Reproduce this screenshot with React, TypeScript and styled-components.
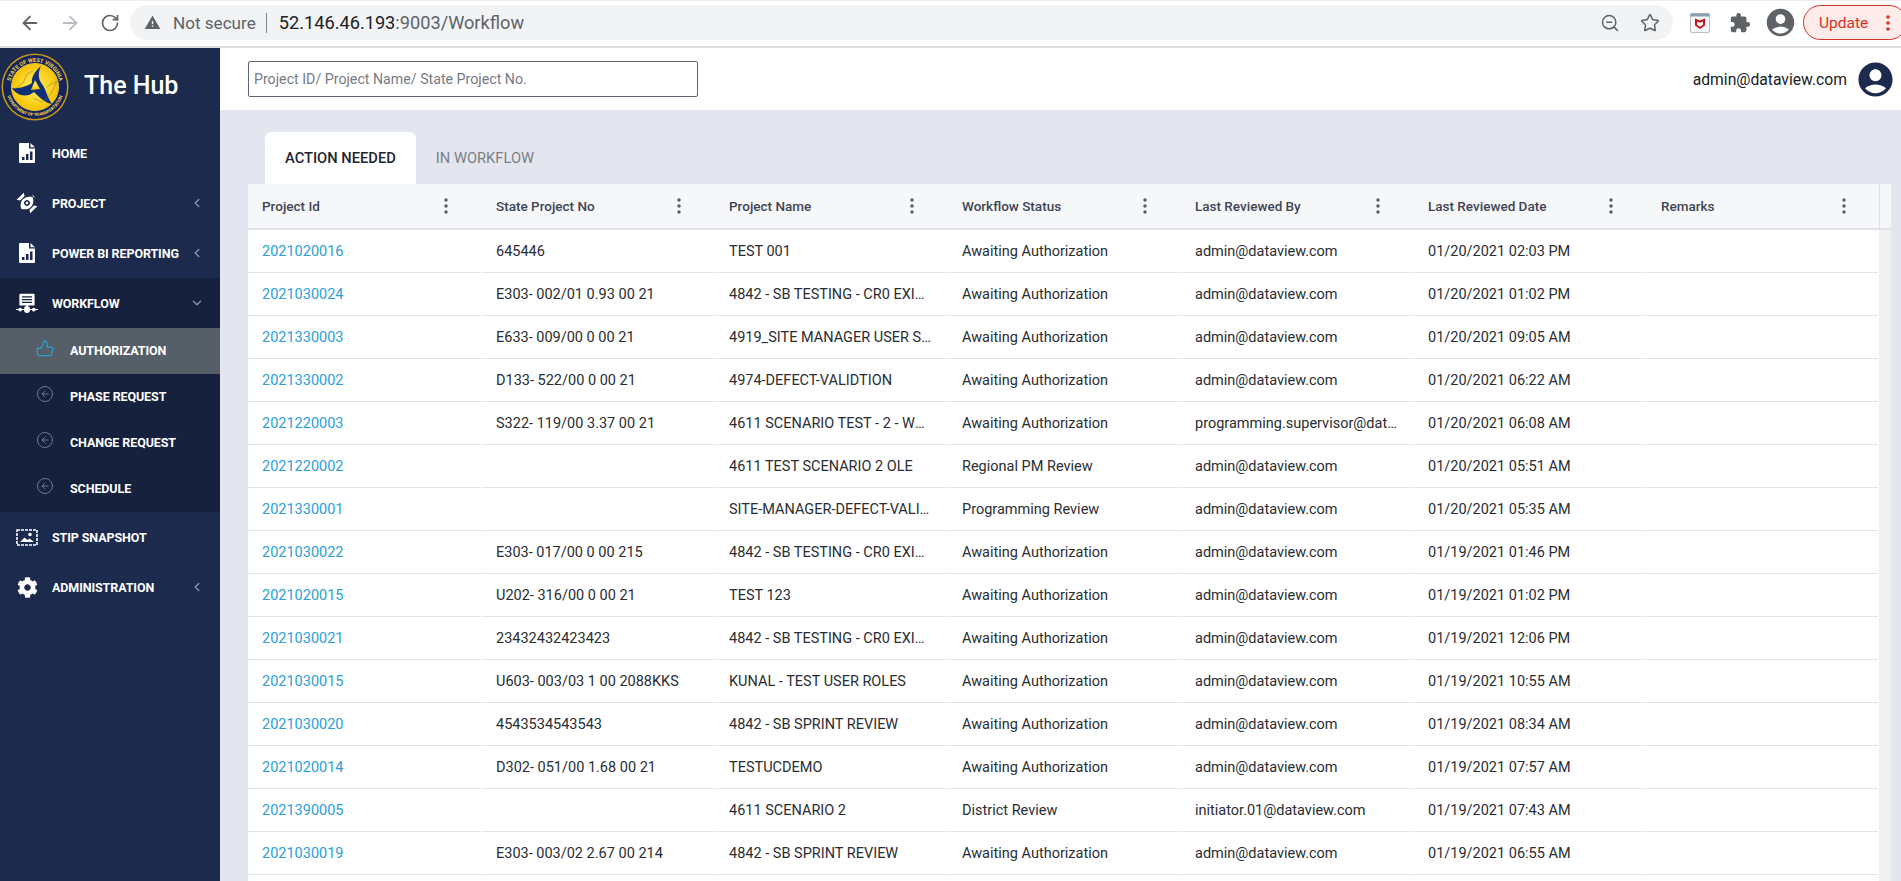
import * as React from 'react';
import styled, { createGlobalStyle } from 'styled-components';
import {
  ArrowLeft,
  ArrowRight,
  ChevronDown,
  ChevronLeft,
  CircleArrowLeft,
  RotateCw,
  Star,
  ZoomOut,
} from 'lucide-react';
import { FaCog } from 'react-icons/fa';
import { MdAccountCircle, MdExtension, MdWarning } from 'react-icons/md';

const COLOR_NAVY = '#1c2b4d';
const COLOR_NAVY_DARK = '#16213d';
const COLOR_LINK = '#2ba0d8';

const GlobalStyle = createGlobalStyle`
  html, body {
    margin: 0;
    height: 100%;
    overflow: hidden;
    background: #fff;
    font-family: Roboto, "Liberation Sans", sans-serif;
  }
  * { box-sizing: border-box; }
`;

const Page = styled.div`
  width: 1901px;
  height: 881px;
  display: flex;
  flex-direction: column;
  overflow: hidden;
`;

/* browser chrome */
const BrowserBar = styled.div`
  height: 48px;
  flex: none;
  display: flex;
  align-items: center;
  padding: 0 0 2px 10px;
  background: #fff;
  border-top: 1px solid #eceef1;
  border-bottom: 2px solid #dadce0;
  overflow: hidden;
`;

const NavButton = styled.div<{ $faded?: boolean }>`
  width: 40px;
  height: 30px;
  flex: none;
  display: flex;
  align-items: center;
  justify-content: center;
  color: ${p => (p.$faded ? '#b9bcc0' : '#5f6368')};
`;

const AddressPill = styled.div`
  width: 1543px;
  height: 35px;
  flex: none;
  border-radius: 18px;
  background: #f1f3f4;
  display: flex;
  align-items: center;
  padding-left: 14px;
  color: #5f6368;
`;

const Secure = styled.span`
  margin-left: 12px;
  font-size: 17.1px;
`;

const Divider = styled.span`
  width: 1px;
  height: 20px;
  margin: 0 12px 0 10px;
  background: #80868b;
`;

const Url = styled.span`
  font-size: 18.2px;
`;

const Host = styled.span`
  color: #202124;
`;

const PillIcons = styled.div`
  margin-left: auto;
  display: flex;
  gap: 20px;
  align-items: center;
  color: #5f6368;
  padding-right: 13px;
`;

const ChromeIcons = styled.div`
  display: flex;
  flex: none;
  align-items: center;
  margin-left: 7px;
  color: #5f6368;
`;

const ChromeSlot = styled.div`
  width: 40px;
  display: flex;
  justify-content: center;
  align-items: center;
`;

const UpdateButton = styled.div`
  width: 104px;
  height: 35px;
  margin-left: 3px;
  border: 1px solid #d93025;
  border-radius: 18px;
  background: #fdecea;
  color: #d93025;
  font-size: 15.5px;
  display: flex;
  align-items: center;
  padding-left: 15px;
  gap: 18px;
  flex: none;
`;

const MenuDots = styled.svg`
  flex: none;
`;

/* app shell */
const Shell = styled.div`
  flex: 1;
  min-height: 0;
  display: flex;
`;

const Sidebar = styled.aside`
  width: 220px;
  flex: none;
  background: ${COLOR_NAVY};
  color: #fff;
`;

const Brand = styled.div`
  height: 80px;
  display: flex;
  align-items: flex-start;
  padding: 5px 0 0 1px;
  gap: 15px;
`;

const BrandName = styled.div`
  font-size: 25px;
  font-weight: 500;
  line-height: 65px;
`;

const NavItem = styled.div`
  height: 50px;
  display: flex;
  align-items: center;
  padding-left: 16px;
  font-size: 12.5px;
  font-weight: 700;
  letter-spacing: -0.1px;
  color: #fff;
`;

const NavIcon = styled.span`
  width: 22px;
  height: 24px;
  margin-right: 14px;
  display: flex;
  align-items: center;
  justify-content: center;
  color: #fff;
`;

const NavCaret = styled.span`
  margin-left: auto;
  margin-right: 16px;
  display: flex;
  color: #8791a6;
`;

const NavGroup = styled.div`
  background: ${COLOR_NAVY_DARK};
`;

const SubItem = styled.div<{ $active?: boolean }>`
  height: 46px;
  display: flex;
  align-items: center;
  padding: 0 0 2px 36px;
  font-size: 12.5px;
  font-weight: 700;
  letter-spacing: -0.1px;
  color: #fff;
  background: ${p => (p.$active ? '#565f68' : 'transparent')};
`;

const SubIcon = styled.span<{ $active?: boolean }>`
  width: 18px;
  margin-right: 16px;
  margin-top: -4px;
  display: flex;
  color: ${p => (p.$active ? COLOR_LINK : '#75829a')};
`;

/* content */
const Content = styled.main`
  flex: 1;
  min-width: 0;
  background: #e3e6ee;
  display: flex;
  flex-direction: column;
`;

const TopBar = styled.header`
  height: 62px;
  flex: none;
  background: #fff;
  display: flex;
  align-items: center;
  padding: 0 5px 0 28px;
`;

const SearchInput = styled.input`
  width: 450px;
  height: 36px;
  border: 1px solid #5f6475;
  border-radius: 2px;
  padding: 0 5px;
  font-family: Roboto, "Liberation Sans", sans-serif;
  font-size: 14.2px;
  outline: none;
  &::placeholder {
    color: #777b85;
  }
`;

const UserName = styled.div`
  margin-left: auto;
  margin-right: 8px;
  font-size: 15.7px;
  color: #202124;
`;

const Tabs = styled.div`
  display: flex;
  flex: none;
  margin: 22px 0 0 45px;
  height: 52px;
`;

const Tab = styled.div<{ $active?: boolean }>`
  padding: 0 20px;
  display: flex;
  align-items: center;
  font-size: 14.7px;
  font-weight: ${p => (p.$active ? 500 : 400)};
  color: ${p => (p.$active ? '#1f2430' : '#7c7f86')};
  background: ${p => (p.$active ? '#fff' : 'transparent')};
  border-radius: 6px 6px 0 0;
`;

const TableCard = styled.section`
  flex: 1;
  min-height: 0;
  margin: 0 10px 0 28px;
  background: #fff;
  overflow: hidden;
  display: flex;
  flex-direction: column;
`;

const HeaderRow = styled.div`
  height: 46px;
  flex: none;
  display: grid;
  grid-template-columns: repeat(7, 233px) 1fr;
  background: #f6f7f9;
  border-bottom: 2px solid #dfe1e5;
`;

const HeaderCell = styled.div`
  display: flex;
  align-items: center;
  padding: 0 14px 0 15px;
  font-size: 13.5px;
  font-weight: 500;
  color: #3f4554;
  &:first-child {
    padding-left: 14px;
  }
`;

const HeaderDots = styled.svg`
  margin-left: auto;
  margin-right: 19px;
  flex: none;
`;

const ScrollHead = styled.div`
  border-left: 1px solid #dfe1e5;
`;

const BodyWrap = styled.div`
  flex: 1;
  min-height: 0;
  display: flex;
`;

const Rows = styled.div`
  width: 1631px;
  flex: none;
`;

const Row = styled.div`
  height: 43px;
  display: grid;
  grid-template-columns: repeat(7, 233px);
`;

const Cell = styled.div`
  margin-right: 1px;
  padding: 0 15px;
  line-height: 43px;
  font-size: 14.5px;
  color: #2a2d33;
  border-bottom: 1px solid #e3e3e3;
  white-space: nowrap;
  overflow: hidden;
  text-overflow: ellipsis;
`;

const LinkCell = styled(Cell)`
  padding-left: 14px;
  color: ${COLOR_LINK};
`;

const ScrollTrack = styled.div`
  flex: 1;
  background: #f1f1f1;
`;

const HomeIcon = () => (
  <svg width="16" height="20" viewBox="0 0 16 20">
    <path
      fillRule="evenodd"
      fill="#fff"
      d="M1 0h9v5.5h6V19a1 1 0 0 1-1 1H1a1 1 0 0 1-1-1V1a1 1 0 0 1 1-1zM3 14v3h2.5v-3zM7 11v6h2.5v-6zM11 8.5V17h2.500V8.500zM11.500 0L16 4.300h-4.500z"
    />
  </svg>
);

const ProjectIcon = () => (
  <svg width="24" height="24" viewBox="0 0 24 24">
    <g transform="rotate(45 12 12)" fill="#fff">
      <path
        fillRule="evenodd"
        d="M12 3C16.500 5.500 18 9 18 12s-1.500 6.500-6 9c-4.500-2.500-6-6-6-9s1.500-6.500 6-9zM12 8.800a3.200 3.200 0 1 0 0 6.400a3.200 3.200 0 0 0 0-6.400z"
      />
      <circle cx="12" cy="12" r="1.500" />
      <path d="M4.800 8.500v7L1.500 17.500v-11zM19.200 8.500v7l3.300 2v-11z" />
      <path d="M9.500 1.500h5l-2.500 1z" />
    </g>
  </svg>
);

const WorkflowIcon = () => (
  <svg width="26" height="22" viewBox="0 0 26 22">
    <path
      fillRule="evenodd"
      fill="#fff"
      d="M5 0h16a1 1 0 0 1 1 1v12a1 1 0 0 1-1 1h-7v2h-2v-2H5a1 1 0 0 1-1-1V1a1 1 0 0 1 1-1zM7 3v1.500h12V3zM7 6.200v1.500h12V6.200zM7 9.400v1.500h12V9.400z"
    />
    <path fill="#fff" d="M0 18h9.500a3.500 3.500 0 0 1 7 0H26v1.400h-9.500a3.500 3.500 0 0 1-7 0H0z" />
    <circle cx="5" cy="18.700" r="2.200" fill="#fff" />
    <circle cx="21" cy="18.700" r="2.200" fill="#fff" />
  </svg>
);

const SnapshotIcon = () => (
  <svg width="22" height="17" viewBox="0 0 22 17">
    <rect x="1" y="1" width="20" height="15" fill="none" stroke="#fff" strokeWidth="1.600" strokeDasharray="3 1" />
    <path fill="#fff" d="M4 13l4.500-4.500 3 2.500 2-1.500L18 13z" />
    <circle cx="14" cy="5.500" r="1.800" fill="#fff" />
  </svg>
);

const ThumbIcon = () => (
  <svg width="18" height="18" viewBox="0 0 20 20" fill="none" stroke="currentColor" strokeWidth="1.300">
    <path d="M1.500 10.500h4L9.500 2c1.700 0 2.800 1.100 2.800 2.800V9h4.500a1.700 1.700 0 0 1 1.700 2l-1.200 6a1.700 1.700 0 0 1-1.700 1.400H3.500a2 2 0 0 1-2-2z" />
  </svg>
);

const DotsIcon = () => (
  <HeaderDots width="4" height="16" viewBox="0 0 4 16">
    <circle cx="2" cy="2" r="1.700" fill="#565c6c" />
    <circle cx="2" cy="8" r="1.700" fill="#565c6c" />
    <circle cx="2" cy="14" r="1.700" fill="#565c6c" />
  </HeaderDots>
);

const StateLogo = () => (
  <svg width="68" height="68" viewBox="0 0 68 68">
    <defs>
      <radialGradient id="seal" cx="50%" cy="50%" r="50%">
        <stop offset="0%" stopColor="#fff26a" />
        <stop offset="100%" stopColor="#f7c200" />
      </radialGradient>
      <path id="sealTop" d="M9 34a25 25 0 0 1 50 0" />
      <path id="sealBottom" d="M5 34a29 29 0 0 0 58 0" />
    </defs>
    <circle cx="34" cy="34" r="33.500" fill="#c79a12" />
    <circle cx="34" cy="34" r="32" fill="#14245c" />
    <circle cx="34" cy="34" r="23.500" fill="url(#seal)" stroke="#e6c33a" />
    <text fill="#f4d44a" fontSize="5.600" fontWeight="700" fontFamily="Roboto, sans-serif">
      <textPath href="#sealTop" startOffset="50%" textAnchor="middle">
        STATE OF WEST VIRGINIA
      </textPath>
    </text>
    <text fill="#f4d44a" fontSize="4.300" fontWeight="700" fontFamily="Roboto, sans-serif">
      <textPath href="#sealBottom" startOffset="50%" textAnchor="middle">
        DEPARTMENT OF TRANSPORTATION
      </textPath>
    </text>
    <path
      fill="#12307a"
      d="M40 13C33 19 30 25 31 30 26 33 19 36 11 35 16 43 26 45 33 39 38 44 44 50 51 51 46 44 45 36 41 31 37 26 37 19 40 13z"
    />
    <path fill="url(#seal)" d="M34 27l5 9-9 1z" />
    <path
      fill="none"
      stroke="#7a7a3a"
      strokeWidth="0.500"
      d="M14 36l8-6 4-9 6-3M32 45l9 4 9-8 6-13-6 3-5 3"
    />
  </svg>
);

const McafeeIcon = () => (
  <svg width="20" height="20" viewBox="0 0 20 20">
    <rect x="0.500" y="0.500" width="19" height="19" rx="1.500" fill="#f7f8f9" stroke="#b6bcc4" />
    <rect x="0.500" y="0.500" width="19" height="3" fill="#8ea0ad" />
    <path fill="#c01818" d="M5 5.500l5 2 5-2v7l-5 3.500-5-3.500zM7 8.500v3.200l3 2 3-2V8.500l-3 1.200z" />
  </svg>
);

type Project = [string, string, string, string, string, string];

const PROJECTS: Project[] = [
  ['2021020016', '645446', 'TEST 001', 'Awaiting Authorization', 'admin@dataview.com', '01/20/2021 02:03 PM'],
  ['2021030024', 'E303- 002/01 0.93 00 21', '4842 - SB TESTING - CR0 EXISTING', 'Awaiting Authorization', 'admin@dataview.com', '01/20/2021 01:02 PM'],
  ['2021330003', 'E633- 009/00 0 00 21', '4919_SITE MANAGER USER STORY', 'Awaiting Authorization', 'admin@dataview.com', '01/20/2021 09:05 AM'],
  ['2021330002', 'D133- 522/00 0 00 21', '4974-DEFECT-VALIDTION', 'Awaiting Authorization', 'admin@dataview.com', '01/20/2021 06:22 AM'],
  ['2021220003', 'S322- 119/00 3.37 00 21', '4611 SCENARIO TEST - 2 - WORKFLOW', 'Awaiting Authorization', 'programming.supervisor@dataview.com', '01/20/2021 06:08 AM'],
  ['2021220002', '', '4611 TEST SCENARIO 2 OLE', 'Regional PM Review', 'admin@dataview.com', '01/20/2021 05:51 AM'],
  ['2021330001', '', 'SITE-MANAGER-DEFECT-VALIDATION', 'Programming Review', 'admin@dataview.com', '01/20/2021 05:35 AM'],
  ['2021030022', 'E303- 017/00 0 00 215', '4842 - SB TESTING - CR0 EXISTING', 'Awaiting Authorization', 'admin@dataview.com', '01/19/2021 01:46 PM'],
  ['2021020015', 'U202- 316/00 0 00 21', 'TEST 123', 'Awaiting Authorization', 'admin@dataview.com', '01/19/2021 01:02 PM'],
  ['2021030021', '23432432423423', '4842 - SB TESTING - CR0 EXISTING', 'Awaiting Authorization', 'admin@dataview.com', '01/19/2021 12:06 PM'],
  ['2021030015', 'U603- 003/03 1 00 2088KKS', 'KUNAL - TEST USER ROLES', 'Awaiting Authorization', 'admin@dataview.com', '01/19/2021 10:55 AM'],
  ['2021030020', '4543534543543', '4842 - SB SPRINT REVIEW', 'Awaiting Authorization', 'admin@dataview.com', '01/19/2021 08:34 AM'],
  ['2021020014', 'D302- 051/00 1.68 00 21', 'TESTUCDEMO', 'Awaiting Authorization', 'admin@dataview.com', '01/19/2021 07:57 AM'],
  ['2021390005', '', '4611 SCENARIO 2', 'District Review', 'initiator.01@dataview.com', '01/19/2021 07:43 AM'],
  ['2021030019', 'E303- 003/02 2.67 00 214', '4842 - SB SPRINT REVIEW', 'Awaiting Authorization', 'admin@dataview.com', '01/19/2021 06:55 AM'],
];

const COLUMNS = [
  'Project Id',
  'State Project No',
  'Project Name',
  'Workflow Status',
  'Last Reviewed By',
  'Last Reviewed Date',
  'Remarks',
];

export default function App() {
  return (
    <Page>
      <GlobalStyle />
      <BrowserBar>
        <NavButton>
          <ArrowLeft size={22} strokeWidth={2} />
        </NavButton>
        <NavButton $faded>
          <ArrowRight size={22} strokeWidth={2} />
        </NavButton>
        <NavButton>
          <RotateCw size={20} strokeWidth={2} />
        </NavButton>
        <AddressPill>
          <MdWarning size={17} color="#5f6368" />
          <Secure>Not secure</Secure>
          <Divider />
          <Url>
            <Host>52.146.46.193</Host>
            :9003/Workflow
          </Url>
          <PillIcons>
            <ZoomOut size={20} strokeWidth={1.8} />
            <Star size={20} strokeWidth={1.8} />
          </PillIcons>
        </AddressPill>
        <ChromeIcons>
          <ChromeSlot>
            <McafeeIcon />
          </ChromeSlot>
          <ChromeSlot>
            <MdExtension size={22} />
          </ChromeSlot>
          <ChromeSlot>
            <MdAccountCircle size={33} />
          </ChromeSlot>
        </ChromeIcons>
        <UpdateButton>
          Update
          <MenuDots width="4" height="16" viewBox="0 0 4 16">
            <circle cx="2" cy="2" r="1.800" fill="#d93025" />
            <circle cx="2" cy="8" r="1.800" fill="#d93025" />
            <circle cx="2" cy="14" r="1.800" fill="#d93025" />
          </MenuDots>
        </UpdateButton>
      </BrowserBar>

      <Shell>
        <Sidebar>
          <Brand>
            <StateLogo />
            <BrandName>The Hub</BrandName>
          </Brand>
          <NavItem>
            <NavIcon>
              <HomeIcon />
            </NavIcon>
            HOME
          </NavItem>
          <NavItem>
            <NavIcon>
              <ProjectIcon />
            </NavIcon>
            PROJECT
            <NavCaret>
              <ChevronLeft size={14} strokeWidth={2.500} />
            </NavCaret>
          </NavItem>
          <NavItem>
            <NavIcon>
              <HomeIcon />
            </NavIcon>
            POWER BI REPORTING
            <NavCaret>
              <ChevronLeft size={14} strokeWidth={2.500} />
            </NavCaret>
          </NavItem>
          <NavGroup>
            <NavItem>
              <NavIcon>
                <WorkflowIcon />
              </NavIcon>
              WORKFLOW
              <NavCaret>
                <ChevronDown size={14} strokeWidth={2.500} />
              </NavCaret>
            </NavItem>
            <SubItem $active>
              <SubIcon $active>
                <ThumbIcon />
              </SubIcon>
              AUTHORIZATION
            </SubItem>
            <SubItem>
              <SubIcon>
                <CircleArrowLeft size={18} strokeWidth={1.200} />
              </SubIcon>
              PHASE REQUEST
            </SubItem>
            <SubItem>
              <SubIcon>
                <CircleArrowLeft size={18} strokeWidth={1.200} />
              </SubIcon>
              CHANGE REQUEST
            </SubItem>
            <SubItem>
              <SubIcon>
                <CircleArrowLeft size={18} strokeWidth={1.200} />
              </SubIcon>
              SCHEDULE
            </SubItem>
          </NavGroup>
          <NavItem>
            <NavIcon>
              <SnapshotIcon />
            </NavIcon>
            STIP SNAPSHOT
          </NavItem>
          <NavItem>
            <NavIcon>
              <FaCog size={21} />
            </NavIcon>
            ADMINISTRATION
            <NavCaret>
              <ChevronLeft size={14} strokeWidth={2.500} />
            </NavCaret>
          </NavItem>
        </Sidebar>

        <Content>
          <TopBar>
            <SearchInput placeholder="Project ID/ Project Name/ State Project No." />
            <UserName>admin@dataview.com</UserName>
            <MdAccountCircle size={41} color={COLOR_NAVY} />
          </TopBar>
          <Tabs>
            <Tab $active>ACTION NEEDED</Tab>
            <Tab>IN WORKFLOW</Tab>
          </Tabs>
          <TableCard>
            <HeaderRow>
              {COLUMNS.map(col => (
                <HeaderCell key={col}>
                  {col}
                  <DotsIcon />
                </HeaderCell>
              ))}
              <ScrollHead />
            </HeaderRow>
            <BodyWrap>
              <Rows>
                {PROJECTS.map(p => (
                  <Row key={p[0]}>
                    <LinkCell>{p[0]}</LinkCell>
                    <Cell>{p[1]}</Cell>
                    <Cell>{p[2]}</Cell>
                    <Cell>{p[3]}</Cell>
                    <Cell>{p[4]}</Cell>
                    <Cell>{p[5]}</Cell>
                    <Cell />
                  </Row>
                ))}
              </Rows>
              <ScrollTrack />
            </BodyWrap>
          </TableCard>
        </Content>
      </Shell>
    </Page>
  );
}
